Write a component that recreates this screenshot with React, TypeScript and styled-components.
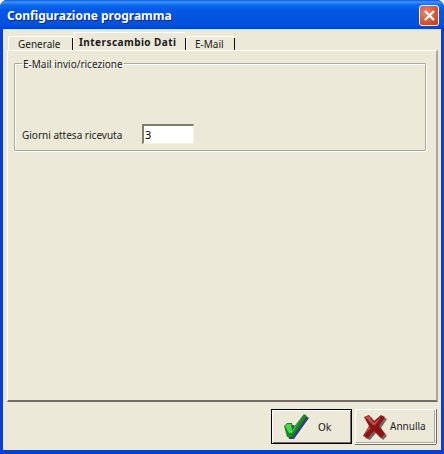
import { createGlobalStyle, styled } from "styled-components";

const GlobalStyle = createGlobalStyle`
  html, body {
    margin: 0;
    padding: 0;
    background: #ffffff;
  }
  * {
    box-sizing: border-box;
  }
`;

const Win = styled.div`
  width: 444px;
  height: 454px;
  display: flex;
  flex-direction: column;
  font-family: "Noto Sans", "Liberation Sans", Arial, sans-serif;
  font-size: 10px;
  color: #000000;
  background: #0a3fd0;
  border-radius: 7px 7px 0 0;
  overflow: hidden;
`;

const TitleBar = styled.div`
  height: 29px;
  flex: none;
  display: flex;
  align-items: center;
  justify-content: space-between;
  padding: 2px 5px 0 7px;
  background: linear-gradient(
    to bottom,
    #0a5ad8 0,
    #3d95ff 2px,
    #0a6af0 5px,
    #0458e4 10px,
    #0352de 20px,
    #0450e0 25px,
    #0340c8 29px
  );
`;

const Title = styled.span`
  font-family: "Noto Sans", Tahoma, sans-serif;
  font-weight: 700;
  font-size: 12px;
  color: #ffffff;
  text-shadow: 1px 1px 0 #0a2a90;
`;

const CloseButton = styled.div`
  width: 20px;
  height: 21px;
  display: flex;
  align-items: center;
  justify-content: center;
  border: 1px solid #ffffff;
  border-radius: 3px;
  background: radial-gradient(circle at 35% 35%, #e8886a, #d2502e 65%, #b8381a);
`;

const Body = styled.div`
  flex: 1;
  min-height: 0;
  margin: 0 3px 4px 3px;
  padding: 0 5px 0 4px;
  background: #ece9d8;
  display: flex;
  flex-direction: column;
`;

const TabRow = styled.div`
  height: 21px;
  flex: none;
  margin-left: 1px;
  display: flex;
  align-items: flex-end;
`;

const Tab = styled.div<{ $active?: boolean; $w: number; $pad: number }>`
  width: ${(p) => p.$w}px;
  height: ${(p) => (p.$active ? "18px" : "14px")};
  display: flex;
  align-items: center;
  padding-left: ${(p) => p.$pad}px;
  font-weight: ${(p) => (p.$active ? 700 : 400)};
  letter-spacing: ${(p) => (p.$active ? "0.45px" : "0")};
  border-top: 1px solid #ffffff;
  border-left: 1px solid #ffffff;
  border-radius: 3px 3px 0 0;
  color: #1a1a1a;
`;

const TabEdge = styled.span`
  width: 1px;
  height: 12px;
  margin-left: auto;
  align-self: flex-end;
  background: #111111;
`;

const Page = styled.div`
  width: 431px;
  height: 352px;
  flex: none;
  padding: 12px 10px 0 6px;
  border-top: 1px solid #ffffff;
  border-left: 1px solid #ffffff;
  border-right: 2px solid #aca899;
  border-bottom: 2px solid #716f64;
`;

const Group = styled.fieldset`
  margin: 0;
  width: 412px;
  height: 88px;
  padding: 0 7px;
  border: 1px solid #aca899;
  border-radius: 1px;
  box-shadow: 1px 1px 0 #ffffff, inset 1px 1px 0 #ffffff;
  display: block;
`;

const Legend = styled.legend`
  padding: 0 1px;
  height: 0;
  line-height: 0;
  color: #222222;
`;

const FieldRow = styled.div`
  display: flex;
  align-items: center;
  margin-top: 60px;
`;

const FieldLabel = styled.label`
  width: 120px;
  padding-top: 1px;
  color: #222222;
`;

const Input = styled.div`
  width: 52px;
  height: 20px;
  padding: 1px 0 0 1px;
  font-size: 11px;
  background: #ffffff;
  border-top: 2px solid #7f7c70;
  border-left: 2px solid #7f7c70;
  border-right: 1px solid #f4f2e8;
  border-bottom: 1px solid #f4f2e8;
`;

const Footer = styled.div`
  flex: 1;
  display: flex;
  justify-content: flex-end;
  align-items: flex-start;
  gap: 3px;
  padding: 7px 0 0 0;
`;

const Button = styled.div<{ $default?: boolean }>`
  width: 81px;
  height: 35px;
  display: flex;
  align-items: center;
  background: #ece9d8;
  border: 1px solid ${(p) => (p.$default ? "#000000" : "#ffffff")};
  box-shadow: ${(p) =>
    p.$default
      ? "inset 1px 1px 0 #ffffff, inset -1px -1px 0 #716f64"
      : "0 1px 0 #716f64, 1px 0 0 #716f64, inset -1px -1px 0 #aca899"};
`;

const ButtonIcon = styled.svg<{ $left: number }>`
  flex: none;
  margin-left: ${(p) => p.$left}px;
`;

const OkLabel = styled.span`
  margin-left: 6px;
  padding-top: 2px;
  font-family: "DejaVu Sans Condensed", "DejaVu Sans", sans-serif;
  font-size: 11px;
  color: #222222;
`;

const CancelLabel = styled.span`
  margin-left: 0;
  padding-bottom: 1px;
  color: #222222;
`;

const CheckIcon = () => (
  <ButtonIcon $left={10} width="30" height="28" viewBox="0 0 30 28">
    <path d="M2 13L5 10H10L11 15L22 1L25 3L10 24H5Z" fill="#3c3c78" transform="translate(2 2)" />
    <path d="M2 13L5 10H10L11 15L22 1L25 3L10 24H5Z" fill="#128a24" />
    <path d="M3 13L5 11H9L10 18L21 3L10 20H7Z" fill="#4fd44a" />
  </ButtonIcon>
);

const CrossIcon = () => (
  <ButtonIcon $left={4} width="30" height="28" viewBox="0 0 30 28">
    <path d="M4 4L9 2L14 8L21 2L25 4L19 13L25 21L21 25L14 18L8 25L3 23L9 13Z" fill="#6a6a6a" transform="translate(2 2)" />
    <path d="M4 4L9 2L14 8L21 2L25 4L19 13L25 21L21 25L14 18L8 25L3 23L9 13Z" fill="#8e1414" />
    <path d="M5 4L9 3L14 10L22 3L15 12L13 12ZM4 22L9 14L11 15Z" fill="#c05050" />
  </ButtonIcon>
);

export default function App() {
  return (
    <>
      <GlobalStyle />
      <Win>
        <TitleBar>
          <Title>Configurazione programma</Title>
          <CloseButton>
            <svg width="13" height="13" viewBox="0 0 13 13">
              <path d="M2 2l9 9M11 2l-9 9" stroke="#ffffff" strokeWidth="2.2" />
            </svg>
          </CloseButton>
        </TitleBar>
        <Body>
          <TabRow>
            <Tab $w={65} $pad={9}>
              Generale
              <TabEdge />
            </Tab>
            <Tab $active $w={113} $pad={5}>
              Interscambio Dati
              <TabEdge />
            </Tab>
            <Tab $w={49} $pad={8}>
              E-Mail
              <TabEdge />
            </Tab>
          </TabRow>
          <Page>
            <Group>
              <Legend>E-Mail invio/ricezione</Legend>
              <FieldRow>
                <FieldLabel>Giorni attesa ricevuta</FieldLabel>
                <Input>3</Input>
              </FieldRow>
            </Group>
          </Page>
          <Footer>
            <Button $default>
              <CheckIcon />
              <OkLabel>Ok</OkLabel>
            </Button>
            <Button>
              <CrossIcon />
              <CancelLabel>Annulla</CancelLabel>
            </Button>
          </Footer>
        </Body>
      </Win>
    </>
  );
}
